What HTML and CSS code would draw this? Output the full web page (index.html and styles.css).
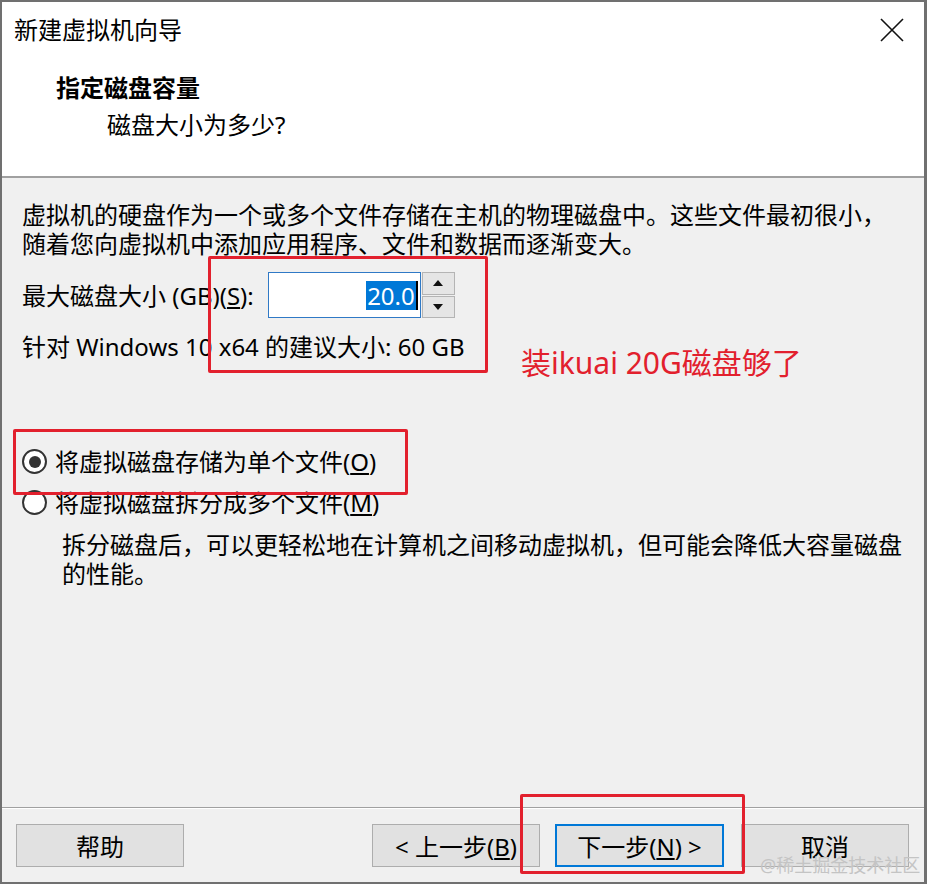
FILE: index.html
```html
<!DOCTYPE html>
<html lang="zh-CN">
<head>
<meta charset="utf-8">
<title>新建虚拟机向导</title>
<link rel="stylesheet" href="styles.css">
</head>
<body>
<div class="window">
  <header class="head">
    <div class="titlebar">
      <span class="title">新建虚拟机向导</span>
      <svg class="close" width="24" height="24" viewBox="0 0 24 24" aria-label="关闭">
        <path d="M1 1 L23 23 M23 1 L1 23" stroke="#111" stroke-width="1.6" fill="none"/>
      </svg>
    </div>
    <h1 class="heading">指定磁盘容量</h1>
    <p class="subheading">磁盘大小为多少?</p>
  </header>

  <main class="content">
    <p class="intro">虚拟机的硬盘作为一个或多个文件存储在主机的物理磁盘中。这些文件最初很小，<br>随着您向虚拟机中添加应用程序、文件和数据而逐渐变大。</p>

    <div class="size-row">
      <span class="label">最大磁盘大小 (GB)(<u>S</u>):</span>
      <div class="spin">
        <div class="spin-input"><span class="sel">20.0</span><span class="caret"></span></div>
        <div class="spin-btns">
          <span class="spin-btn"><span class="tri up"></span></span>
          <span class="spin-btn"><span class="tri down"></span></span>
        </div>
      </div>
    </div>

    <p class="recommend">针对 Windows 10 x64 的建议大小: 60 GB</p>

    <div class="options">
      <div class="option"><span class="radio checked"></span><span>将虚拟磁盘存储为单个文件(<u>O</u>)</span></div>
      <div class="option second"><span class="radio"></span><span>将虚拟磁盘拆分成多个文件(<u>M</u>)</span></div>
      <p class="option-desc">拆分磁盘后，可以更轻松地在计算机之间移动虚拟机，但可能会降低大容量磁盘<br>的性能。</p>
    </div>
  </main>

  <footer class="foot">
    <button class="btn">帮助</button>
    <div class="spacer"></div>
    <button class="btn">&lt; 上一步(<u>B</u>)</button>
    <button class="btn default">下一步(<u>N</u>) &gt;</button>
    <button class="btn">取消</button>
  </footer>
</div>

<div class="mark box-size"></div>
<div class="mark box-single"></div>
<div class="mark box-next"></div>
<div class="note">装ikuai 20G磁盘够了</div>
<div class="watermark">@稀土掘金技术社区</div>
</body>
</html>
```

FILE: styles.css
```css
* { box-sizing: border-box; }

html, body {
  margin: 0;
  padding: 0;
}

body {
  position: relative;
  width: 927px;
  height: 884px;
  overflow: hidden;
  font-family: "Noto Sans", "Noto Sans CJK SC", sans-serif;
  font-size: 24px;
  color: #000;
  background: #6e6e6e;
}

.window {
  width: 927px;
  height: 884px;
  border-style: solid;
  border-color: #707070;
  border-width: 2px 3px 2px 2px;
  background: #f0f0f0;
  display: flex;
  flex-direction: column;
}

/* header */
.head {
  height: 176px;
  flex: none;
  background: #fff;
  border-bottom: 2px solid #a0a0a0;
  padding-top: 13px;
}

.titlebar {
  height: 30px;
  display: flex;
  align-items: center;
  justify-content: space-between;
  padding: 0 20px 0 12px;
}

.title {
  font-size: 24px;
  line-height: 30px;
}

.close { display: block; }

.heading {
  margin: 28px 0 0 54px;
  font-size: 24px;
  line-height: 30px;
  font-weight: 700;
}

.subheading {
  margin: 7px 0 0 105px;
  font-size: 24px;
  line-height: 30px;
}

/* content */
.content {
  flex: 1;
  padding: 22px 0 0 20px;
  line-height: 29px;
}

.intro {
  margin: 0;
  white-space: nowrap;
}

.size-row {
  margin-top: 14px;
  height: 46px;
  display: flex;
  align-items: center;
  gap: 14px;
}

.spin {
  display: flex;
  gap: 1px;
  height: 46px;
}

.spin-input {
  width: 153px;
  height: 46px;
  background: #fff;
  border: 1px solid #2f79c6;
  display: flex;
  align-items: center;
  justify-content: flex-end;
  padding-right: 2px;
}

.sel {
  background: #0078d7;
  color: #fff;
  line-height: 29px;
  padding: 0 1px;
}

.caret {
  width: 2px;
  height: 29px;
  background: #000;
}

.spin-btns {
  display: flex;
  flex-direction: column;
  gap: 1px;
  width: 33px;
}

.spin-btn {
  flex: 1;
  background: #e5e5e5;
  border: 1px solid #b4b4b4;
  display: flex;
  align-items: center;
  justify-content: center;
}

.tri {
  width: 0;
  height: 0;
  border-left: 5px solid transparent;
  border-right: 5px solid transparent;
}
.tri.up { border-bottom: 6px solid #111; }
.tri.down { border-top: 6px solid #111; }

.recommend {
  margin: 14px 0 0;
}

.options {
  margin-top: 86px;
}

.option {
  display: flex;
  align-items: center;
  gap: 8px;
  height: 29px;
}

.option.second { margin-top: 12px; }

.radio {
  width: 25px;
  height: 25px;
  border-radius: 50%;
  border: 2px solid #333;
  background: #fff;
  display: flex;
  align-items: center;
  justify-content: center;
  flex: none;
}

.radio.checked::after {
  content: "";
  width: 12px;
  height: 12px;
  border-radius: 50%;
  background: #333;
}

.option-desc {
  margin: 13px 0 0 40px;
  white-space: nowrap;
}

/* footer */
.foot {
  height: 75px;
  flex: none;
  border-top: 1px solid #a0a0a0;
  box-shadow: inset 0 1px 0 #fff;
  display: flex;
  align-items: flex-start;
  padding: 16px 15px 0 14px;
  gap: 15px;
}

.spacer { flex: 1; }

.btn {
  width: 168px;
  height: 43px;
  background: #e1e1e1;
  border: 1px solid #adadad;
  font-family: inherit;
  font-size: 24px;
  color: #000;
  padding: 0;
}

.btn.default {
  border: 2px solid #0078d7;
  width: 169px;
}

.btn:last-child { margin-left: 2px; }

/* overlays: annotations drawn over the screenshot */
.mark {
  position: absolute;
  border: 3px solid #e2202d;
  border-radius: 2px;
}

.box-size { left: 208px; top: 256px; width: 280px; height: 117px; }
.box-single { left: 13px; top: 429px; width: 395px; height: 66px; }
.box-next { left: 520px; top: 794px; width: 225px; height: 80px; }

.note {
  position: absolute;
  left: 521px;
  top: 343px;
  font-size: 30px;
  line-height: 40px;
  color: #e2202d;
  white-space: nowrap;
}

.watermark {
  position: absolute;
  left: 760px;
  top: 852px;
  font-size: 18px;
  line-height: 26px;
  color: #c4c4c4;
  white-space: nowrap;
}
```
